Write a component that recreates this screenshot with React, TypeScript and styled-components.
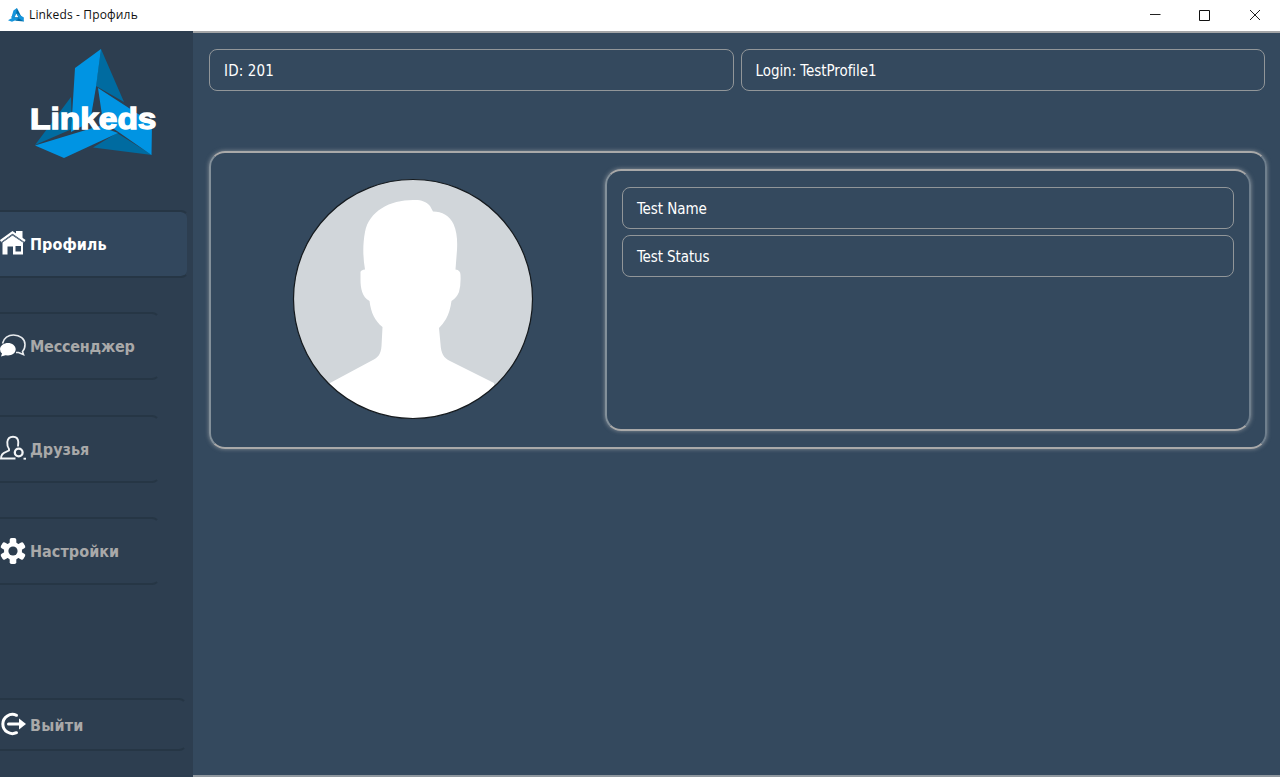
import React from "react";
import styled, { createGlobalStyle } from "styled-components";

const GlobalStyle = createGlobalStyle`
  *, *::before, *::after { box-sizing: border-box; }
  html, body { margin: 0; padding: 0; overflow: hidden; }
`;

const Window = styled.div`
  display: flex;
  flex-direction: column;
  width: 1280px;
  height: 777px;
  background: #34495e;
  color: #fff;
  font-family: "DejaVu Sans Condensed", "DejaVu Sans", sans-serif;
`;

const TitleBar = styled.header`
  display: flex;
  align-items: flex-start;
  flex: none;
  height: 31px;
  padding-left: 8px;
  background: #fff;
  color: #111;

  > svg { margin-top: 8px; }
`;

const Title = styled.span`
  flex: 1;
  margin-left: 5px;
  font-family: "Open Sans", "Noto Sans", sans-serif;
  font-size: 12px;
  line-height: 30px;
  letter-spacing: 0.15px;
`;

const Controls = styled.div`
  display: flex;
  height: 29px;
`;

const ControlButton = styled.button`
  display: flex;
  align-items: center;
  justify-content: center;
  width: 50px;
  padding: 0;
  border: 0;
  background: none;
`;

const Body = styled.div`
  display: flex;
  flex: 1;
  min-height: 0;
`;

const Sidebar = styled.aside`
  display: flex;
  flex-direction: column;
  flex: none;
  width: 193px;
  background: #2d3e50;
  padding-bottom: 26px;
`;

const LogoArea = styled.div`
  height: 178.600px;
  padding: 14px 0 0 26px;
`;

const Nav = styled.nav`
  display: flex;
  flex-direction: column;
  flex: 1;
  gap: 34.600px;
`;

const NavItem = styled.a<{ $active?: boolean; $wide?: boolean; $compact?: boolean }>`
  display: flex;
  align-items: center;
  gap: 4px;
  width: ${(p) => (p.$active ? 189 : p.$wide ? 187 : 160)}px;
  height: ${(p) => (p.$compact ? 53 : 68)}px;
  margin-top: ${(p) => (p.$compact ? "auto" : 0)};
  border-style: solid;
  border-width: 2px 2px 2px 0;
  border-color: #263645 transparent;
  border-radius: 0 8px 8px 0;
  background: ${(p) => (p.$active ? "#32475d" : "transparent")};
  background-clip: padding-box;
  color: ${(p) => (p.$active ? "#fff" : "#a9a9a9")};
  font-size: 16px;
  font-weight: 700;
  line-height: 20px;

  svg {
    flex: none;
    margin-bottom: 1px;
  }
`;

const NavLabel = styled.span<{ $spacing: number }>`
  padding-top: 2px;
  letter-spacing: ${(p) => p.$spacing}px;
`;

const Main = styled.main`
  flex: 1;
  min-width: 0;
  border-top: 2px solid #a3a5a7;
  border-bottom: 2px solid #8f979e;
  padding: 16px 13px 0 16px;
`;

const AccountRow = styled.div`
  display: flex;
  gap: 7px;
  padding-right: 2px;
`;

const Field = styled.div<{ $spacing: number }>`
  flex: 1;
  height: 41.500px;
  padding-left: 14px;
  border: 1px solid #919699;
  border-radius: 8px;
  font-size: 15px;
  line-height: 42px;
  letter-spacing: ${(p) => p.$spacing}px;
  white-space: nowrap;
`;

const Panel = styled.section`
  border: 2px solid;
  border-color: #a9a9a9 #6f7f8d #a9a9a9 #83909a;
  border-radius: 16px;
  box-shadow: 0 0 4px rgba(190, 190, 190, 0.6);
`;

const ProfilePanel = styled(Panel)`
  display: flex;
  justify-content: space-between;
  height: 298px;
  margin-top: 60.500px;
  padding: 16px 14px 0 81px;
`;

const DetailsPanel = styled(Panel)`
  display: flex;
  flex-direction: column;
  gap: 6.500px;
  width: 646px;
  height: 262px;
  padding: 16px 15px;

  ${Field} {
    flex: none;
    height: 41.500px;
  }
`;

const AvatarFrame = styled.div`
  width: 242px;
  height: 242px;
  margin-top: 9px;
`;

function LogoMark({ size, height }: { size: number; height: number }) {
  return (
    <svg width={size} height={height} viewBox="35 49 118 110" preserveAspectRatio="none">
      <path fill="#006ba6" d="M101 49 152 155 93 150 60 120Z" />
      <path fill="#1595dc" d="M101 49 75 68 60 128 84 124 96 87Z" />
      <path fill="#fff" d="M96 92 84 122 112 122Z" />
      <path fill="#1595dc" d="M98 88 152 123 151 155 117 131Z" />
      <path fill="#1595dc" d="M35 145 64 158 118 133 75 122Z" />
    </svg>
  );
}

function Logo() {
  return (
    <svg width="140" height="120" viewBox="26 45 140 120" aria-label="Linkeds">
      <path fill="#006ba0" d="M101 49 124 102 96 86ZM71 97 35 145 72 129ZM117 133 93 147.500 152 155Z" />
      <path fill="#0094e3" d="M101 49 75 68 71 132 90 122 96 87Z" />
      <path fill="#0094e3" d="M98 88 152 123 151.500 155 117 131 103 122Z" />
      <path fill="#0094e3" d="M35 145.500 64 158 118 133 99 126Z" />
      <text
        x="30"
        y="129"
        fill="#fff"
        stroke="#fff"
        strokeWidth="1.300"
        fontFamily="'Liberation Sans', sans-serif"
        fontWeight="700"
        fontSize="29"
        textLength="126.500"
        lengthAdjust="spacingAndGlyphs"
      >
        Linkeds
      </text>
    </svg>
  );
}

const HomeIcon = () => (
  <svg width="26" height="26" viewBox="0 0 26 26">
    <path fill="#fff" d="M2.500 12.500 12.500 5.500 23 12.500V24.500H13V16.500H7.500V24.500H2.500ZM15.500 16V21.500H21V16Z" fillRule="evenodd" />
    <path fill="#fff" d="M16 1H22.500V9L16 5Z" />
    <path fill="none" stroke="#fff" strokeWidth="2.200" d="M.5 11 12.500 2.300 25 11" />
    <path fill="none" stroke="#6c7d8f" strokeWidth="1" d="M1.500 12.500 12.500 4.700 24 12.500" />
  </svg>
);

const ChatIcon = () => (
  <svg width="26" height="26" viewBox="0 0 26 26">
    <path fill="none" stroke="#e8ebee" strokeWidth="1.600" d="M2.500 10.500C3.500 5 8.500 2 13.500 2 20 2 25 6 25 11.500Q25 16 22.500 18.500L23.500 21.500 18.500 19.500 16 19.500" />
    <path fill="#fff" d="M8 10C12 10 15.700 12.500 15.700 16.300S12 22.500 8 22.500L5.500 22.200 1 23.500 2 20.500Q0 19 0 16.300C0 12.500 4 10 8 10Z" />
  </svg>
);

const FriendsIcon = () => (
  <svg width="26" height="26" viewBox="0 0 26 26" fill="none" stroke="#f2f4f6" strokeWidth="1.900">
    <path d="M15.500 23.500H1Q1 18.500 6 16.800L9 15.500V14Q7 11.500 7.300 7 8 1.700 13 1.700 18 1.700 18.300 7L18 11.500" />
    <circle cx="18.700" cy="17.500" r="3.900" strokeWidth="2.300" />
    <path d="M23.500 23.700H26" />
  </svg>
);

const GearIcon = () => (
  <svg width="26" height="26" viewBox="0 0 26 26">
    <g fill="#fff">
      {[0, 60, 120].map((angle) => (
        <rect key={angle} x="9.700" y="0" width="6.600" height="26" rx="1.800" transform={`rotate(${angle} 13 13)`} />
      ))}
      <circle cx="13" cy="13" r="9" />
    </g>
    <circle cx="13" cy="13" r="4.600" fill="#2d3e50" />
  </svg>
);

const ExitIcon = () => (
  <svg width="26" height="26" viewBox="0 0 26 26">
    <path fill="none" stroke="#fff" strokeWidth="3" strokeLinecap="round" d="M16.500 4.300A9.600 9.600 0 1 0 16.500 21.700M8.500 13H20" />
    <path fill="#fff" d="M19 7.500 26 13 19 18.500Z" />
  </svg>
);

function Avatar() {
  return (
    <svg width="242" height="242" viewBox="292 178 242 242">
      <defs>
        <clipPath id="avatar-circle">
          <circle cx="413" cy="299" r="119.500" />
        </clipPath>
      </defs>
      <circle cx="413" cy="299" r="119.500" fill="#d1d6da" />
      <path
        clipPath="url(#avatar-circle)"
        fill="#fff"
        d="M413 200C420 199.500 426 201 430 206L433 211.500C442 211.500 450 216 453.500 224 457 232 457.500 240 457 250L455.500 269.500Q460.500 270 460.500 275 461 285 459 292 456.500 298 451.500 301 450 312 446 319 443 324 439 328L440.500 344C441 353 443.500 358 450 361L494 383 500 425H325L330 383 371 361C378 358 381 354 381.500 346L382.500 327C375 321 371 313 369.500 301 362 297 360.500 288 360.500 280V272Q361 270 365 269.500C363 258 362.500 245 365 232 369 211 390 200 413 200Z"
      />
      <circle cx="413" cy="299" r="119.500" fill="none" stroke="#151a1e" strokeWidth="1.200" />
    </svg>
  );
}

export default function App() {
  return (
    <>
      <GlobalStyle />
      <Window>
        <TitleBar>
          <LogoMark size={16} height={14} />
          <Title>Linkeds - Профиль</Title>
          <Controls>
            <ControlButton aria-label="Minimize">
              <svg width="12" height="12" stroke="#222" fill="none"><path d="M1 5.500H11.500" /></svg>
            </ControlButton>
            <ControlButton aria-label="Maximize">
              <svg width="12" height="12" stroke="#111" fill="none"><path d="M.5 1.500H10.500V11.500H.5Z" /></svg>
            </ControlButton>
            <ControlButton aria-label="Close">
              <svg width="12" height="12" stroke="#222" fill="none"><path d="M1 1 11 11M11 1 1 11" /></svg>
            </ControlButton>
          </Controls>
        </TitleBar>
        <Body>
          <Sidebar>
            <LogoArea><Logo /></LogoArea>
            <Nav>
              <NavItem $active><HomeIcon /><NavLabel $spacing={0.05}>Профиль</NavLabel></NavItem>
              <NavItem><ChatIcon /><NavLabel $spacing={-0.22}>Мессенджер</NavLabel></NavItem>
              <NavItem><FriendsIcon /><NavLabel $spacing={0}>Друзья</NavLabel></NavItem>
              <NavItem><GearIcon /><NavLabel $spacing={0.05}>Настройки</NavLabel></NavItem>
              <NavItem $wide $compact><ExitIcon /><NavLabel $spacing={0.2}>Выйти</NavLabel></NavItem>
            </Nav>
          </Sidebar>
          <Main>
            <AccountRow>
              <Field $spacing={0.15}>ID: 201</Field>
              <Field $spacing={-0.05}>Login: TestProfile1</Field>
            </AccountRow>
            <ProfilePanel>
              <AvatarFrame><Avatar /></AvatarFrame>
              <DetailsPanel>
                <Field $spacing={-0.08}>Test Name</Field>
                <Field $spacing={-0.1}>Test Status</Field>
              </DetailsPanel>
            </ProfilePanel>
          </Main>
        </Body>
      </Window>
    </>
  );
}
